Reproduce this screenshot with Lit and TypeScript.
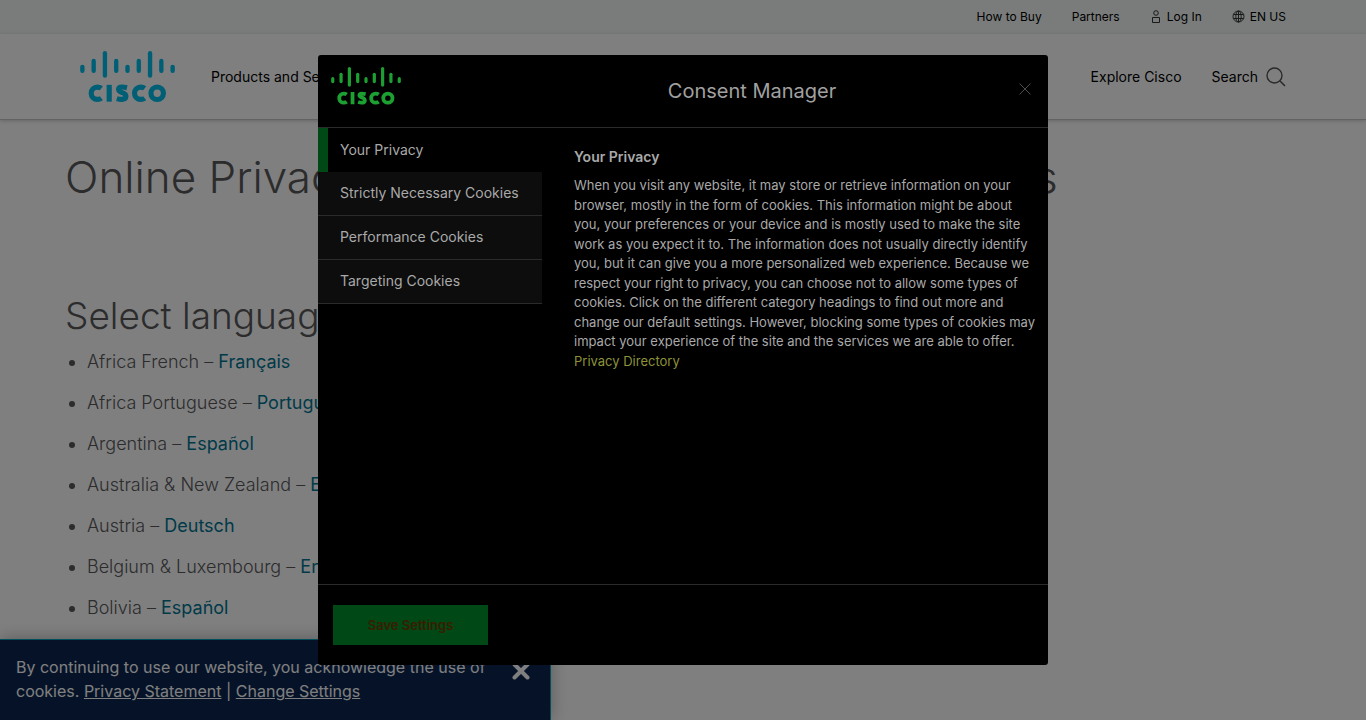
import { LitElement, html, css, svg } from "lit";
import { customElement, property } from "lit/decorators.js";

@customElement("cisco-logo")
class CiscoLogo extends LitElement {
  static styles = css`
    :host { display: block; }
    svg { display: block; width: 100%; height: auto; overflow: visible; }
    .bars, .word { fill: none; stroke: currentColor; }
    .bars { stroke-width: 4.4; stroke-linecap: round; }
    .word { stroke-width: 5.2; }
  `;
  render() {
    const bars = [[16, 20], [10, 20], [2.2, 24.8], [10, 20], [16, 20], [10, 20], [2.2, 24.8], [10, 20], [16, 20]];
    return html`<svg viewBox="0 0 96 52" aria-label="Cisco" role="img">
      <g class="bars">${bars.map((b, i) => svg`<line x1=${2.4 + i * 11.4} x2=${2.4 + i * 11.4} y1=${b[0]} y2=${b[1]}></line>`)}</g>
      <g class="word">
        <path d="M21.6 37.7Q20 36.5 17.5 36.5A6.2 6.2 0 0 0 17.5 48.9Q20 48.9 21.6 47.7"/>
        <path d="M29.5 34.2V51.2"/>
        <path d="M47.5 37.1Q44.5 36.4 42.5 36.4Q39 36.4 39 38.7Q39 40.6 42.2 41.8Q46.4 43.2 46.4 45.8Q46.4 48.9 42 48.9Q39.8 48.9 37.2 48.1"/>
        <path d="M65.4 37.7Q63.8 36.5 61.3 36.5A6.2 6.2 0 0 0 61.3 48.9Q63.8 48.9 65.4 47.7"/>
        <circle cx="78" cy="42.7" r="6.3"/>
      </g>
    </svg>`;
  }
}

@customElement("consent-manager")
class ConsentManager extends LitElement {
  @property({ attribute: false }) categories = ["Your Privacy", "Strictly Necessary Cookies", "Performance Cookies", "Targeting Cookies"];
  static styles = css`
    :host { display: flex; flex-direction: column; box-sizing: border-box; width: min(730px, 100%); height: 610px; max-height: 100%; background: #000; color: #a9a9a9; border-radius: 3px; overflow: hidden; }
    button { font: inherit; color: inherit; border: 0; background: none; padding: 0; text-align: left; }
    header { display: grid; grid-template-columns: 210px 1fr 72px; height: 72px; padding: 0 13px; align-items: center; border-bottom: 1px solid #2b2b2b; flex: none; }
    .logo { width: 70px; color: #1da032; align-self: start; margin-top: 12px; }
    h2 { margin: 0; font-size: 20px; font-weight: 400; text-align: center; color: #a0a0a0; }
    .close { justify-self: end; color: #4c4c4c; margin: 0 4px 4px 0; display: flex; }
    .close svg { width: 12px; height: 12px; stroke: currentColor; fill: none; }
    .body { display: grid; grid-template-columns: 224px 1fr; flex: 1; min-height: 0; }
    nav { display: flex; flex-direction: column; }
    .tab { box-sizing: border-box; height: 44px; padding: 0 16px 2px 22px; font-size: 14px; background: #0d0d0d; border-bottom: 1px solid #2b2b2b; }
    .tab.on { background: #000; border-left: 10px solid #004916; border-bottom: 0; padding-left: 12px; }
    .panel { padding: 18px 10px 0 32px; font-size: 13px; line-height: 1.5; }
    h3 { margin: 1px 0 9px; font-size: 14px; line-height: 20px; font-weight: 600; }
    p { margin: 0; }
    .panel a { color: #8d9338; text-decoration: none; display: block; }
    footer { flex: none; border-top: 1px solid #2b2b2b; padding: 20px 15px; }
    .save { width: 155px; height: 40px; background: #004916; color: #3a1c00; text-align: center; font-size: 13px; font-weight: 600; display: block; }
  `;
  render() {
    return html`
      <header>
        <cisco-logo class="logo"></cisco-logo>
        <h2>Consent Manager</h2>
        <button class="close" aria-label="Close"><svg viewBox="0 0 12 12"><path d="M.5 .5L11.5 11.5M11.5 .5L.5 11.5"/></svg></button>
      </header>
      <div class="body">
        <nav>${this.categories.map((c, i) => html`<button class="tab ${i ? "" : "on"}">${c}</button>`)}</nav>
        <section class="panel">
          <h3>Your Privacy</h3>
          <p>When you visit any website, it may store or retrieve information on your browser, mostly in the form of cookies. This information might be about you, your preferences or your device and is mostly used to make the site work as you expect it to. The information does not usually directly identify you, but it can give you a more personalized web experience. Because we respect your right to privacy, you can choose not to allow some types of cookies. Click on the different category headings to find out more and change our default settings. However, blocking some types of cookies may impact your experience of the site and the services we are able to offer.</p>
          <a href="#">Privacy Directory</a>
        </section>
      </div>
      <footer><button class="save">Save Settings</button></footer>`;
  }
}

@customElement("app-root")
class AppRoot extends LitElement {
  static styles = css`
    :host { display: block; position: relative; height: 100vh; overflow: hidden; background: #fff; font-family: Inter, "Liberation Sans", sans-serif; color: #000; }
    a { color: inherit; text-decoration: none; }
    button { font: inherit; color: inherit; border: 0; background: none; padding: 0; }
    svg { fill: none; stroke: currentColor; display: block; }
    .top { display: flex; justify-content: flex-end; align-items: center; gap: 30px; box-sizing: border-box; height: 34px; padding: 0 80px 2px; background: #f3f8f7; font-size: 12px; }
    .top a { display: flex; align-items: center; gap: 5px; }
    .top svg { color: #333; }
    .main { display: flex; align-items: center; gap: 30px; height: 85px; padding: 0 80px; border-bottom: 1px solid #c4c4c4; box-shadow: 0 1px 4px rgba(0,0,0,.2); font-size: 14px; }
    .brand { width: 95px; color: #00bceb; margin-right: 6px; }
    .explore { margin-left: auto; }
    .search { display: flex; align-items: center; gap: 8px; }
    .search svg { color: #555; }
    main { padding: 26px 65px; color: #58585b; font-weight: 300; }
    h1 { margin: 0; font-size: 44px; line-height: 62px; font-weight: 300; white-space: nowrap; }
    h2 { margin: 80px 0 4px; font-size: 37px; line-height: 56px; font-weight: 300; }
    ul { margin: 0; padding-left: 22px; font-size: 18px; line-height: 27px; }
    li { margin-bottom: 14px; }
    li a { color: #007493; font-weight: 400; }
    .banner { position: absolute; left: 0; bottom: 0; width: 551px; height: 81px; box-sizing: border-box; padding: 15px 16px; display: flex; justify-content: space-between; background: #0a2550; border: solid #049fb9; border-width: 1px 1px 0 0; color: #fff; font-size: 16px; line-height: 24px; box-shadow: 0 0 16px rgba(0,0,0,.3); }
    .banner p { margin: 0; width: 480px; }
    .banner a { text-decoration: underline; }
    .dismiss { align-self: flex-start; margin: 7px 4px 0 0; }
    .shade { position: absolute; inset: 0; display: flex; align-items: center; justify-content: center; background: rgba(0,0,0,.5); }
  `;
  langs = [["Africa French", "Français"], ["Africa Portuguese", "Português"], ["Argentina", "Español"], ["Australia & New Zealand", "English"], ["Austria", "Deutsch"], ["Belgium & Luxembourg", "English"], ["Bolivia", "Español"]];
  render() {
    return html`
      <div class="top">
        <a href="#">How to Buy</a><a href="#">Partners</a>
        <a href="#"><svg width="12" height="13" viewBox="0 0 12 13"><circle cx="6" cy="3" r="2.3"/><path d="M2.5 12.5V7.5H9.5V12.5Z"/></svg>Log In</a>
        <a href="#"><svg width="13" height="13" viewBox="0 0 13 13"><circle cx="6.5" cy="6.5" r="5.5"/><ellipse cx="6.5" cy="6.5" rx="2.7" ry="5.5"/><path d="M6.5 1V12M1.5 4.5H11.5M1.5 8.5H11.5"/></svg>EN US</a>
      </div>
      <header class="main">
        <a href="#" class="brand"><cisco-logo></cisco-logo></a>
        <a href="#">Products and Services</a>
        <a href="#" class="explore">Explore Cisco</a>
        <button class="search">Search<svg width="20" height="20" viewBox="0 0 20 20"><circle cx="8.5" cy="8.5" r="7.5" stroke-width="1.4"/><path d="M14 14L19 19" stroke-width="1.6"/></svg></button>
      </header>
      <main>
        <h1>Online Privacy Statement: All Language Versions</h1>
        <h2>Select language</h2>
        <ul>${this.langs.map(([c, l]) => html`<li>${c} – <a href="#">${l}</a></li>`)}</ul>
      </main>
      <aside class="banner">
        <p>By continuing to use our website, you acknowledge the use of cookies. <a href="#">Privacy Statement</a> | <a href="#">Change Settings</a></p>
        <button class="dismiss" aria-label="Dismiss"><svg width="18" height="18" viewBox="0 0 18 18" stroke-width="4" stroke-linecap="round"><path d="M2.5 2.5L15.5 15.5M15.5 2.5L2.5 15.5"/></svg></button>
      </aside>
      <div class="shade" role="dialog" aria-label="Consent Manager"><consent-manager></consent-manager></div>`;
  }
}
